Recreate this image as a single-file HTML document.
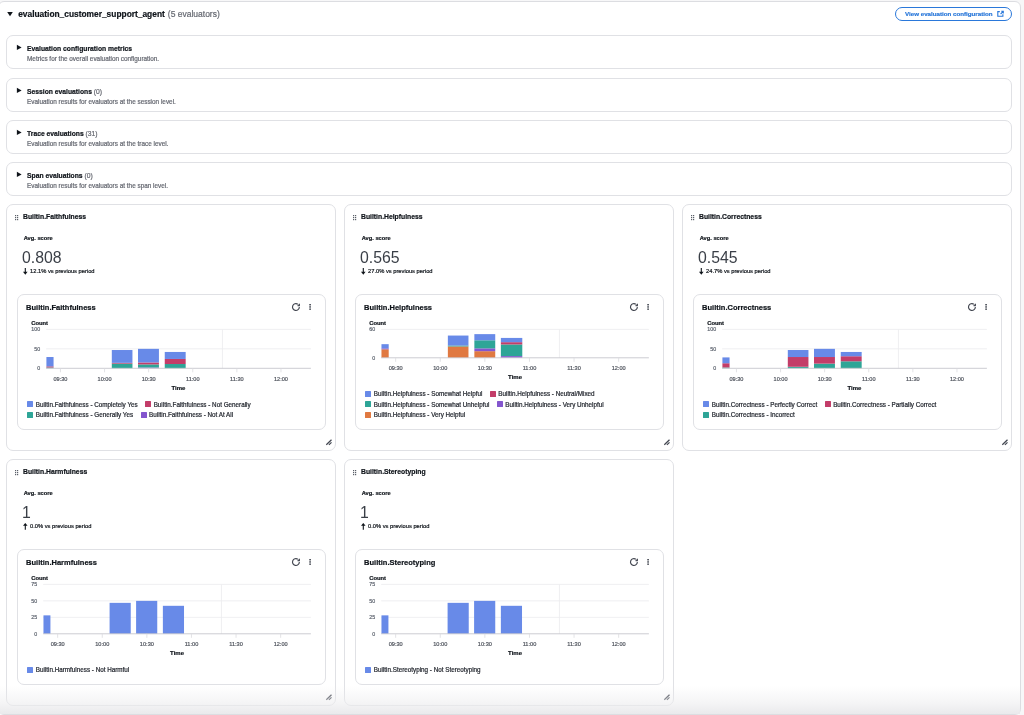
<!DOCTYPE html><html><head><meta charset="utf-8"><style>
html,body{margin:0;padding:0;}
body{width:1024px;height:715px;overflow:hidden;position:relative;background:#f7f7f8;font-family:"Liberation Sans", sans-serif;}
#root{position:absolute;left:0;top:0;width:1024px;height:715px;will-change:transform;}
.t{position:absolute;white-space:nowrap;line-height:1;-webkit-text-stroke:0.2px currentColor;}
.b{position:absolute;box-sizing:border-box;}
svg{position:absolute;left:0;top:0;overflow:visible;}
</style></head><body><div id="root">
<div class="b" style="left:-2.00px;top:1.00px;width:1023.00px;height:713.50px;background:#fff;border:1px solid #dcdde1;border-radius:6px;"></div>
<svg width="1024" height="30"><path d="M7.2 12.1 L12.8 12.1 L10 16.2 Z" fill="#0f141a"/></svg>
<div class="t" style="left:18.20px;top:9.69px;font-size:8.4px;font-weight:bold;color:#0f141a;">evaluation_customer_support_agent</div>
<div class="t" style="left:167.80px;top:9.60px;font-size:8.5px;font-weight:normal;color:#656871;">(5 evaluators)</div>
<div class="b" style="left:895.00px;top:7.00px;width:116.50px;height:13.70px;border:1.4px solid #2a78da;border-radius:8px;background:#fff;"></div>
<div class="t" style="left:905.00px;top:10.75px;font-size:6.2px;font-weight:bold;color:#2a78da;">View evaluation configuration</div>
<svg width="1024" height="30"><g fill="none" stroke="#2a78da" stroke-width="1.1"><path d="M999.8 11.6 H997.8 V16.3 H1002.9 V14.2"/><path d="M1000.6 14 L1003.3 11.3 M1001.2 11.3 H1003.3 V13.4"/></g></svg>
<div class="b" style="left:6.00px;top:35.00px;width:1006.00px;height:34.00px;border:1px solid #e0e1e5;border-radius:7px;background:#fff;"></div>
<svg width="1024" height="715"><path d="M16.9 44.80 L21.6 47.40 L16.9 50.00 Z" fill="#0f141a"/></svg>
<div class="t" style="left:27.00px;top:45.69px;font-size:6.75px;font-weight:bold;color:#0f141a;">Evaluation configuration metrics</div>
<div class="t" style="left:27.00px;top:55.78px;font-size:6.4px;font-weight:normal;color:#656871;">Metrics for the overall evaluation configuration.</div>
<div class="b" style="left:6.00px;top:78.00px;width:1006.00px;height:34.00px;border:1px solid #e0e1e5;border-radius:7px;background:#fff;"></div>
<svg width="1024" height="715"><path d="M16.9 87.80 L21.6 90.40 L16.9 93.00 Z" fill="#0f141a"/></svg>
<div class="t" style="left:27.00px;top:88.69px;font-size:6.75px;font-weight:bold;color:#0f141a;">Session evaluations <span style="font-weight:normal;color:#656871">(0)</span></div>
<div class="t" style="left:27.00px;top:98.78px;font-size:6.4px;font-weight:normal;color:#656871;">Evaluation results for evaluators at the session level.</div>
<div class="b" style="left:6.00px;top:120.00px;width:1006.00px;height:34.00px;border:1px solid #e0e1e5;border-radius:7px;background:#fff;"></div>
<svg width="1024" height="715"><path d="M16.9 129.80 L21.6 132.40 L16.9 135.00 Z" fill="#0f141a"/></svg>
<div class="t" style="left:27.00px;top:130.69px;font-size:6.75px;font-weight:bold;color:#0f141a;">Trace evaluations <span style="font-weight:normal;color:#656871">(31)</span></div>
<div class="t" style="left:27.00px;top:140.78px;font-size:6.4px;font-weight:normal;color:#656871;">Evaluation results for evaluators at the trace level.</div>
<div class="b" style="left:6.00px;top:162.00px;width:1006.00px;height:34.00px;border:1px solid #e0e1e5;border-radius:7px;background:#fff;"></div>
<svg width="1024" height="715"><path d="M16.9 171.80 L21.6 174.40 L16.9 177.00 Z" fill="#0f141a"/></svg>
<div class="t" style="left:27.00px;top:172.69px;font-size:6.75px;font-weight:bold;color:#0f141a;">Span evaluations <span style="font-weight:normal;color:#656871">(0)</span></div>
<div class="t" style="left:27.00px;top:182.78px;font-size:6.4px;font-weight:normal;color:#656871;">Evaluation results for evaluators at the span level.</div>
<div class="b" style="left:6.00px;top:204.00px;width:330.00px;height:247.00px;border:1px solid #e0e1e5;border-radius:7px;background:#fff;"></div>
<svg width="1024" height="715"><rect x="15.00" y="215.00" width="1.2" height="1.2" fill="#5a5f68"/><rect x="15.00" y="217.00" width="1.2" height="1.2" fill="#5a5f68"/><rect x="15.00" y="219.00" width="1.2" height="1.2" fill="#5a5f68"/><rect x="17.00" y="215.00" width="1.2" height="1.2" fill="#5a5f68"/><rect x="17.00" y="217.00" width="1.2" height="1.2" fill="#5a5f68"/><rect x="17.00" y="219.00" width="1.2" height="1.2" fill="#5a5f68"/></svg>
<div class="t" style="left:23.00px;top:213.54px;font-size:6.8px;font-weight:bold;color:#0f141a;">Builtin.Faithfulness</div>
<div class="t" style="left:23.70px;top:236.07px;font-size:5.7px;font-weight:bold;color:#0f141a;">Avg. score</div>
<div class="t" style="left:22.00px;top:250.23px;font-size:15.8px;font-weight:normal;color:#3a3f47;-webkit-text-stroke:0;">0.808</div>
<svg width="1024" height="715"><path d="M25.30 268.00 V272.90" stroke="#0f141a" stroke-width="1.1"/><path d="M23.00 271.80 L25.30 274.70 L27.60 271.80 Z" fill="#0f141a"/></svg>
<div class="t" style="left:30.00px;top:269.23px;font-size:5.75px;font-weight:normal;color:#0f141a;">12.1% vs previous period</div>
<div class="b" style="left:17.00px;top:294.00px;width:309.00px;height:136.00px;border:1px solid #e0e1e5;border-radius:7px;background:#fff;"></div>
<div class="t" style="left:26.10px;top:303.65px;font-size:7.5px;font-weight:bold;color:#0f141a;">Builtin.Faithfulness</div>
<svg width="1024" height="715"><g transform="translate(292.00,303.10) scale(0.49)" fill="none" stroke="#424650" stroke-width="2.3" stroke-linejoin="round"><path d="M15 8a7 7 0 1 1-3.08-5.8"/><path d="M15.01 1.55v3.77h-3.76" fill="#424650"/></g><rect x="309.20" y="304.10" width="1.8" height="1.3" fill="#424650"/><rect x="309.20" y="306.30" width="1.8" height="1.3" fill="#424650"/><rect x="309.20" y="308.50" width="1.8" height="1.3" fill="#424650"/></svg>
<div class="t" style="left:31.30px;top:320.79px;font-size:5.8px;font-weight:bold;color:#0f141a;">Count</div>
<div class="t" style="left:40.14px;top:327.41px;font-size:5.3px;font-weight:normal;color:#5f6570;transform:translateX(-100%);">100</div>
<div class="t" style="left:40.14px;top:346.86px;font-size:5.3px;font-weight:normal;color:#5f6570;transform:translateX(-100%);">50</div>
<div class="t" style="left:40.14px;top:366.31px;font-size:5.3px;font-weight:normal;color:#5f6570;transform:translateX(-100%);">0</div>
<div class="t" style="left:60.44px;top:376.66px;font-size:5.6px;font-weight:normal;color:#50555e;transform:translateX(-50%);">09:30</div>
<div class="t" style="left:104.55px;top:376.66px;font-size:5.6px;font-weight:normal;color:#50555e;transform:translateX(-50%);">10:00</div>
<div class="t" style="left:148.66px;top:376.66px;font-size:5.6px;font-weight:normal;color:#50555e;transform:translateX(-50%);">10:30</div>
<div class="t" style="left:192.77px;top:376.66px;font-size:5.6px;font-weight:normal;color:#50555e;transform:translateX(-50%);">11:00</div>
<div class="t" style="left:236.87px;top:376.66px;font-size:5.6px;font-weight:normal;color:#50555e;transform:translateX(-50%);">11:30</div>
<div class="t" style="left:280.98px;top:376.66px;font-size:5.6px;font-weight:normal;color:#50555e;transform:translateX(-50%);">12:00</div>
<div class="t" style="left:178.52px;top:384.82px;font-size:6px;font-weight:bold;color:#0f141a;transform:translateX(-50%);">Time</div>
<svg width="1024" height="715"><line x1="46.14" y1="329.40" x2="310.90" y2="329.40" stroke="#ebebee" stroke-width="0.8"/><line x1="46.14" y1="348.85" x2="310.90" y2="348.85" stroke="#ebebee" stroke-width="0.8"/><line x1="222.47" y1="329.40" x2="222.47" y2="368.30" stroke="#ececef" stroke-width="0.8"/><rect x="46.41" y="367.52" width="7.15" height="0.78" fill="#2ea597"/><rect x="46.41" y="366.36" width="7.15" height="1.17" fill="#c33d69"/><rect x="46.41" y="357.02" width="7.15" height="9.34" fill="#688ae8"/><rect x="111.80" y="363.63" width="20.65" height="4.67" fill="#2ea597"/><rect x="111.80" y="362.85" width="20.65" height="0.78" fill="#c33d69"/><rect x="111.80" y="350.02" width="20.65" height="12.84" fill="#688ae8"/><rect x="138.01" y="367.52" width="20.92" height="0.78" fill="#8456ce"/><rect x="138.01" y="364.41" width="20.92" height="3.11" fill="#2ea597"/><rect x="138.01" y="362.46" width="20.92" height="1.95" fill="#c33d69"/><rect x="138.01" y="348.85" width="20.92" height="13.62" fill="#688ae8"/><rect x="164.75" y="364.02" width="20.92" height="4.28" fill="#2ea597"/><rect x="164.75" y="358.96" width="20.92" height="5.06" fill="#c33d69"/><rect x="164.75" y="351.96" width="20.92" height="7.00" fill="#688ae8"/><line x1="46.14" y1="368.30" x2="310.90" y2="368.30" stroke="#c6c6cd" stroke-width="0.9"/><line x1="60.44" y1="368.30" x2="60.44" y2="372.30" stroke="#dcdce0" stroke-width="0.8"/><line x1="104.55" y1="368.30" x2="104.55" y2="372.30" stroke="#dcdce0" stroke-width="0.8"/><line x1="148.66" y1="368.30" x2="148.66" y2="372.30" stroke="#dcdce0" stroke-width="0.8"/><line x1="192.77" y1="368.30" x2="192.77" y2="372.30" stroke="#dcdce0" stroke-width="0.8"/><line x1="236.87" y1="368.30" x2="236.87" y2="372.30" stroke="#dcdce0" stroke-width="0.8"/><line x1="280.98" y1="368.30" x2="280.98" y2="372.30" stroke="#dcdce0" stroke-width="0.8"/></svg>
<div class="b" style="left:27.30px;top:401.40px;width:6.00px;height:6.00px;background:#688ae8;border-radius:0.5px;"></div>
<div class="t" style="left:35.80px;top:401.67px;font-size:6.3px;font-weight:normal;color:#1d2129;">Builtin.Faithfulness - Completely Yes</div>
<div class="b" style="left:145.16px;top:401.40px;width:6.00px;height:6.00px;background:#c33d69;border-radius:0.5px;"></div>
<div class="t" style="left:153.66px;top:401.67px;font-size:6.3px;font-weight:normal;color:#1d2129;">Builtin.Faithfulness - Not Generally</div>
<div class="b" style="left:27.30px;top:412.00px;width:6.00px;height:6.00px;background:#2ea597;border-radius:0.5px;"></div>
<div class="t" style="left:35.80px;top:412.27px;font-size:6.3px;font-weight:normal;color:#1d2129;">Builtin.Faithfulness - Generally Yes</div>
<div class="b" style="left:140.61px;top:412.00px;width:6.00px;height:6.00px;background:#8456ce;border-radius:0.5px;"></div>
<div class="t" style="left:149.11px;top:412.27px;font-size:6.3px;font-weight:normal;color:#1d2129;">Builtin.Faithfulness - Not At All</div>
<svg width="1024" height="715"><path d="M326.30 444.70 L331.50 439.80 M328.90 444.90 L331.50 442.40" stroke="#424650" stroke-width="1.25"/></svg>
<div class="b" style="left:344.00px;top:204.00px;width:330.00px;height:247.00px;border:1px solid #e0e1e5;border-radius:7px;background:#fff;"></div>
<svg width="1024" height="715"><rect x="353.00" y="215.00" width="1.2" height="1.2" fill="#5a5f68"/><rect x="353.00" y="217.00" width="1.2" height="1.2" fill="#5a5f68"/><rect x="353.00" y="219.00" width="1.2" height="1.2" fill="#5a5f68"/><rect x="355.00" y="215.00" width="1.2" height="1.2" fill="#5a5f68"/><rect x="355.00" y="217.00" width="1.2" height="1.2" fill="#5a5f68"/><rect x="355.00" y="219.00" width="1.2" height="1.2" fill="#5a5f68"/></svg>
<div class="t" style="left:361.00px;top:213.54px;font-size:6.8px;font-weight:bold;color:#0f141a;">Builtin.Helpfulness</div>
<div class="t" style="left:361.70px;top:236.07px;font-size:5.7px;font-weight:bold;color:#0f141a;">Avg. score</div>
<div class="t" style="left:360.00px;top:250.23px;font-size:15.8px;font-weight:normal;color:#3a3f47;-webkit-text-stroke:0;">0.565</div>
<svg width="1024" height="715"><path d="M363.30 268.00 V272.90" stroke="#0f141a" stroke-width="1.1"/><path d="M361.00 271.80 L363.30 274.70 L365.60 271.80 Z" fill="#0f141a"/></svg>
<div class="t" style="left:368.00px;top:269.23px;font-size:5.75px;font-weight:normal;color:#0f141a;">27.0% vs previous period</div>
<div class="b" style="left:355.00px;top:294.00px;width:309.00px;height:136.00px;border:1px solid #e0e1e5;border-radius:7px;background:#fff;"></div>
<div class="t" style="left:364.10px;top:303.65px;font-size:7.5px;font-weight:bold;color:#0f141a;">Builtin.Helpfulness</div>
<svg width="1024" height="715"><g transform="translate(630.00,303.10) scale(0.49)" fill="none" stroke="#424650" stroke-width="2.3" stroke-linejoin="round"><path d="M15 8a7 7 0 1 1-3.08-5.8"/><path d="M15.01 1.55v3.77h-3.76" fill="#424650"/></g><rect x="647.20" y="304.10" width="1.8" height="1.3" fill="#424650"/><rect x="647.20" y="306.30" width="1.8" height="1.3" fill="#424650"/><rect x="647.20" y="308.50" width="1.8" height="1.3" fill="#424650"/></svg>
<div class="t" style="left:369.30px;top:320.79px;font-size:5.8px;font-weight:bold;color:#0f141a;">Count</div>
<div class="t" style="left:375.21px;top:327.41px;font-size:5.3px;font-weight:normal;color:#5f6570;transform:translateX(-100%);">60</div>
<div class="t" style="left:375.21px;top:355.81px;font-size:5.3px;font-weight:normal;color:#5f6570;transform:translateX(-100%);">0</div>
<div class="t" style="left:395.66px;top:366.16px;font-size:5.6px;font-weight:normal;color:#50555e;transform:translateX(-50%);">09:30</div>
<div class="t" style="left:440.26px;top:366.16px;font-size:5.6px;font-weight:normal;color:#50555e;transform:translateX(-50%);">10:00</div>
<div class="t" style="left:484.86px;top:366.16px;font-size:5.6px;font-weight:normal;color:#50555e;transform:translateX(-50%);">10:30</div>
<div class="t" style="left:529.46px;top:366.16px;font-size:5.6px;font-weight:normal;color:#50555e;transform:translateX(-50%);">11:00</div>
<div class="t" style="left:574.05px;top:366.16px;font-size:5.6px;font-weight:normal;color:#50555e;transform:translateX(-50%);">11:30</div>
<div class="t" style="left:618.65px;top:366.16px;font-size:5.6px;font-weight:normal;color:#50555e;transform:translateX(-50%);">12:00</div>
<div class="t" style="left:515.05px;top:374.32px;font-size:6px;font-weight:bold;color:#0f141a;transform:translateX(-50%);">Time</div>
<svg width="1024" height="715"><line x1="381.21" y1="329.40" x2="648.90" y2="329.40" stroke="#ebebee" stroke-width="0.8"/><line x1="559.49" y1="329.40" x2="559.49" y2="357.80" stroke="#ececef" stroke-width="0.8"/><rect x="381.47" y="349.28" width="7.23" height="8.52" fill="#e07941"/><rect x="381.47" y="348.33" width="7.23" height="0.95" fill="#8456ce"/><rect x="381.47" y="344.17" width="7.23" height="4.17" fill="#688ae8"/><rect x="447.86" y="346.44" width="20.61" height="11.36" fill="#e07941"/><rect x="447.86" y="345.49" width="20.61" height="0.95" fill="#2ea597"/><rect x="447.86" y="335.55" width="20.61" height="9.94" fill="#688ae8"/><rect x="474.36" y="351.17" width="20.88" height="6.63" fill="#e07941"/><rect x="474.36" y="348.33" width="20.88" height="2.84" fill="#8456ce"/><rect x="474.36" y="340.29" width="20.88" height="8.05" fill="#2ea597"/><rect x="474.36" y="334.13" width="20.88" height="6.15" fill="#688ae8"/><rect x="500.87" y="356.10" width="21.42" height="1.70" fill="#8456ce"/><rect x="500.87" y="344.45" width="21.42" height="11.64" fill="#2ea597"/><rect x="500.87" y="342.18" width="21.42" height="2.27" fill="#c33d69"/><rect x="500.87" y="337.92" width="21.42" height="4.26" fill="#688ae8"/><line x1="381.21" y1="357.80" x2="648.90" y2="357.80" stroke="#c6c6cd" stroke-width="0.9"/><line x1="395.66" y1="357.80" x2="395.66" y2="361.80" stroke="#dcdce0" stroke-width="0.8"/><line x1="440.26" y1="357.80" x2="440.26" y2="361.80" stroke="#dcdce0" stroke-width="0.8"/><line x1="484.86" y1="357.80" x2="484.86" y2="361.80" stroke="#dcdce0" stroke-width="0.8"/><line x1="529.46" y1="357.80" x2="529.46" y2="361.80" stroke="#dcdce0" stroke-width="0.8"/><line x1="574.05" y1="357.80" x2="574.05" y2="361.80" stroke="#dcdce0" stroke-width="0.8"/><line x1="618.65" y1="357.80" x2="618.65" y2="361.80" stroke="#dcdce0" stroke-width="0.8"/></svg>
<div class="b" style="left:365.30px;top:390.80px;width:6.00px;height:6.00px;background:#688ae8;border-radius:0.5px;"></div>
<div class="t" style="left:373.80px;top:391.07px;font-size:6.3px;font-weight:normal;color:#1d2129;">Builtin.Helpfulness - Somewhat Helpful</div>
<div class="b" style="left:489.80px;top:390.80px;width:6.00px;height:6.00px;background:#c33d69;border-radius:0.5px;"></div>
<div class="t" style="left:498.30px;top:391.07px;font-size:6.3px;font-weight:normal;color:#1d2129;">Builtin.Helpfulness - Neutral/Mixed</div>
<div class="b" style="left:365.30px;top:401.40px;width:6.00px;height:6.00px;background:#2ea597;border-radius:0.5px;"></div>
<div class="t" style="left:373.80px;top:401.67px;font-size:6.3px;font-weight:normal;color:#1d2129;">Builtin.Helpfulness - Somewhat Unhelpful</div>
<div class="b" style="left:496.82px;top:401.40px;width:6.00px;height:6.00px;background:#8456ce;border-radius:0.5px;"></div>
<div class="t" style="left:505.32px;top:401.67px;font-size:6.3px;font-weight:normal;color:#1d2129;">Builtin.Helpfulness - Very Unhelpful</div>
<div class="b" style="left:365.30px;top:412.00px;width:6.00px;height:6.00px;background:#e07941;border-radius:0.5px;"></div>
<div class="t" style="left:373.80px;top:412.27px;font-size:6.3px;font-weight:normal;color:#1d2129;">Builtin.Helpfulness - Very Helpful</div>
<svg width="1024" height="715"><path d="M664.30 444.70 L669.50 439.80 M666.90 444.90 L669.50 442.40" stroke="#424650" stroke-width="1.25"/></svg>
<div class="b" style="left:682.00px;top:204.00px;width:330.00px;height:247.00px;border:1px solid #e0e1e5;border-radius:7px;background:#fff;"></div>
<svg width="1024" height="715"><rect x="691.00" y="215.00" width="1.2" height="1.2" fill="#5a5f68"/><rect x="691.00" y="217.00" width="1.2" height="1.2" fill="#5a5f68"/><rect x="691.00" y="219.00" width="1.2" height="1.2" fill="#5a5f68"/><rect x="693.00" y="215.00" width="1.2" height="1.2" fill="#5a5f68"/><rect x="693.00" y="217.00" width="1.2" height="1.2" fill="#5a5f68"/><rect x="693.00" y="219.00" width="1.2" height="1.2" fill="#5a5f68"/></svg>
<div class="t" style="left:699.00px;top:213.54px;font-size:6.8px;font-weight:bold;color:#0f141a;">Builtin.Correctness</div>
<div class="t" style="left:699.70px;top:236.07px;font-size:5.7px;font-weight:bold;color:#0f141a;">Avg. score</div>
<div class="t" style="left:698.00px;top:250.23px;font-size:15.8px;font-weight:normal;color:#3a3f47;-webkit-text-stroke:0;">0.545</div>
<svg width="1024" height="715"><path d="M701.30 268.00 V272.90" stroke="#0f141a" stroke-width="1.1"/><path d="M699.00 271.80 L701.30 274.70 L703.60 271.80 Z" fill="#0f141a"/></svg>
<div class="t" style="left:706.00px;top:269.23px;font-size:5.75px;font-weight:normal;color:#0f141a;">24.7% vs previous period</div>
<div class="b" style="left:693.00px;top:294.00px;width:309.00px;height:136.00px;border:1px solid #e0e1e5;border-radius:7px;background:#fff;"></div>
<div class="t" style="left:702.10px;top:303.65px;font-size:7.5px;font-weight:bold;color:#0f141a;">Builtin.Correctness</div>
<svg width="1024" height="715"><g transform="translate(968.00,303.10) scale(0.49)" fill="none" stroke="#424650" stroke-width="2.3" stroke-linejoin="round"><path d="M15 8a7 7 0 1 1-3.08-5.8"/><path d="M15.01 1.55v3.77h-3.76" fill="#424650"/></g><rect x="985.20" y="304.10" width="1.8" height="1.3" fill="#424650"/><rect x="985.20" y="306.30" width="1.8" height="1.3" fill="#424650"/><rect x="985.20" y="308.50" width="1.8" height="1.3" fill="#424650"/></svg>
<div class="t" style="left:707.30px;top:320.79px;font-size:5.8px;font-weight:bold;color:#0f141a;">Count</div>
<div class="t" style="left:716.14px;top:327.41px;font-size:5.3px;font-weight:normal;color:#5f6570;transform:translateX(-100%);">100</div>
<div class="t" style="left:716.14px;top:346.86px;font-size:5.3px;font-weight:normal;color:#5f6570;transform:translateX(-100%);">50</div>
<div class="t" style="left:716.14px;top:366.31px;font-size:5.3px;font-weight:normal;color:#5f6570;transform:translateX(-100%);">0</div>
<div class="t" style="left:736.44px;top:376.66px;font-size:5.6px;font-weight:normal;color:#50555e;transform:translateX(-50%);">09:30</div>
<div class="t" style="left:780.55px;top:376.66px;font-size:5.6px;font-weight:normal;color:#50555e;transform:translateX(-50%);">10:00</div>
<div class="t" style="left:824.66px;top:376.66px;font-size:5.6px;font-weight:normal;color:#50555e;transform:translateX(-50%);">10:30</div>
<div class="t" style="left:868.77px;top:376.66px;font-size:5.6px;font-weight:normal;color:#50555e;transform:translateX(-50%);">11:00</div>
<div class="t" style="left:912.87px;top:376.66px;font-size:5.6px;font-weight:normal;color:#50555e;transform:translateX(-50%);">11:30</div>
<div class="t" style="left:956.98px;top:376.66px;font-size:5.6px;font-weight:normal;color:#50555e;transform:translateX(-50%);">12:00</div>
<div class="t" style="left:854.52px;top:384.82px;font-size:6px;font-weight:bold;color:#0f141a;transform:translateX(-50%);">Time</div>
<svg width="1024" height="715"><line x1="722.14" y1="329.40" x2="986.90" y2="329.40" stroke="#ebebee" stroke-width="0.8"/><line x1="722.14" y1="348.85" x2="986.90" y2="348.85" stroke="#ebebee" stroke-width="0.8"/><line x1="898.47" y1="329.40" x2="898.47" y2="368.30" stroke="#ececef" stroke-width="0.8"/><rect x="722.41" y="367.52" width="7.15" height="0.78" fill="#2ea597"/><rect x="722.41" y="363.24" width="7.15" height="4.28" fill="#c33d69"/><rect x="722.41" y="357.41" width="7.15" height="5.84" fill="#688ae8"/><rect x="787.80" y="366.74" width="20.65" height="1.56" fill="#2ea597"/><rect x="787.80" y="357.02" width="20.65" height="9.73" fill="#c33d69"/><rect x="787.80" y="350.02" width="20.65" height="7.00" fill="#688ae8"/><rect x="814.01" y="363.63" width="20.92" height="4.67" fill="#2ea597"/><rect x="814.01" y="357.02" width="20.92" height="6.61" fill="#c33d69"/><rect x="814.01" y="348.85" width="20.92" height="8.17" fill="#688ae8"/><rect x="840.75" y="361.30" width="20.92" height="7.00" fill="#2ea597"/><rect x="840.75" y="356.24" width="20.92" height="5.06" fill="#c33d69"/><rect x="840.75" y="351.96" width="20.92" height="4.28" fill="#688ae8"/><line x1="722.14" y1="368.30" x2="986.90" y2="368.30" stroke="#c6c6cd" stroke-width="0.9"/><line x1="736.44" y1="368.30" x2="736.44" y2="372.30" stroke="#dcdce0" stroke-width="0.8"/><line x1="780.55" y1="368.30" x2="780.55" y2="372.30" stroke="#dcdce0" stroke-width="0.8"/><line x1="824.66" y1="368.30" x2="824.66" y2="372.30" stroke="#dcdce0" stroke-width="0.8"/><line x1="868.77" y1="368.30" x2="868.77" y2="372.30" stroke="#dcdce0" stroke-width="0.8"/><line x1="912.87" y1="368.30" x2="912.87" y2="372.30" stroke="#dcdce0" stroke-width="0.8"/><line x1="956.98" y1="368.30" x2="956.98" y2="372.30" stroke="#dcdce0" stroke-width="0.8"/></svg>
<div class="b" style="left:703.30px;top:401.40px;width:6.00px;height:6.00px;background:#688ae8;border-radius:0.5px;"></div>
<div class="t" style="left:711.80px;top:401.67px;font-size:6.3px;font-weight:normal;color:#1d2129;">Builtin.Correctness - Perfectly Correct</div>
<div class="b" style="left:824.64px;top:401.40px;width:6.00px;height:6.00px;background:#c33d69;border-radius:0.5px;"></div>
<div class="t" style="left:833.14px;top:401.67px;font-size:6.3px;font-weight:normal;color:#1d2129;">Builtin.Correctness - Partially Correct</div>
<div class="b" style="left:703.30px;top:412.00px;width:6.00px;height:6.00px;background:#2ea597;border-radius:0.5px;"></div>
<div class="t" style="left:711.80px;top:412.27px;font-size:6.3px;font-weight:normal;color:#1d2129;">Builtin.Correctness - Incorrect</div>
<svg width="1024" height="715"><path d="M1002.30 444.70 L1007.50 439.80 M1004.90 444.90 L1007.50 442.40" stroke="#424650" stroke-width="1.25"/></svg>
<div class="b" style="left:6.00px;top:459.00px;width:330.00px;height:247.00px;border:1px solid #e0e1e5;border-radius:7px;background:#fff;"></div>
<svg width="1024" height="715"><rect x="15.00" y="470.00" width="1.2" height="1.2" fill="#5a5f68"/><rect x="15.00" y="472.00" width="1.2" height="1.2" fill="#5a5f68"/><rect x="15.00" y="474.00" width="1.2" height="1.2" fill="#5a5f68"/><rect x="17.00" y="470.00" width="1.2" height="1.2" fill="#5a5f68"/><rect x="17.00" y="472.00" width="1.2" height="1.2" fill="#5a5f68"/><rect x="17.00" y="474.00" width="1.2" height="1.2" fill="#5a5f68"/></svg>
<div class="t" style="left:23.00px;top:468.54px;font-size:6.8px;font-weight:bold;color:#0f141a;">Builtin.Harmfulness</div>
<div class="t" style="left:23.70px;top:491.07px;font-size:5.7px;font-weight:bold;color:#0f141a;">Avg. score</div>
<div class="t" style="left:22.00px;top:505.23px;font-size:15.8px;font-weight:normal;color:#3a3f47;-webkit-text-stroke:0;">1</div>
<svg width="1024" height="715"><path d="M25.30 529.70 V524.40" stroke="#0f141a" stroke-width="1.1"/><path d="M23.00 525.80 L25.30 523.00 L27.60 525.80 Z" fill="#0f141a"/></svg>
<div class="t" style="left:30.00px;top:524.23px;font-size:5.75px;font-weight:normal;color:#0f141a;">0.0% vs previous period</div>
<div class="b" style="left:17.00px;top:549.00px;width:309.00px;height:136.00px;border:1px solid #e0e1e5;border-radius:7px;background:#fff;"></div>
<div class="t" style="left:26.10px;top:558.65px;font-size:7.5px;font-weight:bold;color:#0f141a;">Builtin.Harmfulness</div>
<svg width="1024" height="715"><g transform="translate(292.00,558.10) scale(0.49)" fill="none" stroke="#424650" stroke-width="2.3" stroke-linejoin="round"><path d="M15 8a7 7 0 1 1-3.08-5.8"/><path d="M15.01 1.55v3.77h-3.76" fill="#424650"/></g><rect x="309.20" y="559.10" width="1.8" height="1.3" fill="#424650"/><rect x="309.20" y="561.30" width="1.8" height="1.3" fill="#424650"/><rect x="309.20" y="563.50" width="1.8" height="1.3" fill="#424650"/></svg>
<div class="t" style="left:31.30px;top:575.79px;font-size:5.8px;font-weight:bold;color:#0f141a;">Count</div>
<div class="t" style="left:37.21px;top:582.41px;font-size:5.3px;font-weight:normal;color:#5f6570;transform:translateX(-100%);">75</div>
<div class="t" style="left:37.21px;top:598.88px;font-size:5.3px;font-weight:normal;color:#5f6570;transform:translateX(-100%);">50</div>
<div class="t" style="left:37.21px;top:615.35px;font-size:5.3px;font-weight:normal;color:#5f6570;transform:translateX(-100%);">25</div>
<div class="t" style="left:37.21px;top:631.81px;font-size:5.3px;font-weight:normal;color:#5f6570;transform:translateX(-100%);">0</div>
<div class="t" style="left:57.66px;top:642.16px;font-size:5.6px;font-weight:normal;color:#50555e;transform:translateX(-50%);">09:30</div>
<div class="t" style="left:102.26px;top:642.16px;font-size:5.6px;font-weight:normal;color:#50555e;transform:translateX(-50%);">10:00</div>
<div class="t" style="left:146.86px;top:642.16px;font-size:5.6px;font-weight:normal;color:#50555e;transform:translateX(-50%);">10:30</div>
<div class="t" style="left:191.46px;top:642.16px;font-size:5.6px;font-weight:normal;color:#50555e;transform:translateX(-50%);">11:00</div>
<div class="t" style="left:236.05px;top:642.16px;font-size:5.6px;font-weight:normal;color:#50555e;transform:translateX(-50%);">11:30</div>
<div class="t" style="left:280.65px;top:642.16px;font-size:5.6px;font-weight:normal;color:#50555e;transform:translateX(-50%);">12:00</div>
<div class="t" style="left:177.05px;top:650.32px;font-size:6px;font-weight:bold;color:#0f141a;transform:translateX(-50%);">Time</div>
<svg width="1024" height="715"><line x1="43.21" y1="584.40" x2="310.90" y2="584.40" stroke="#ebebee" stroke-width="0.8"/><line x1="43.21" y1="600.87" x2="310.90" y2="600.87" stroke="#ebebee" stroke-width="0.8"/><line x1="43.21" y1="617.33" x2="310.90" y2="617.33" stroke="#ebebee" stroke-width="0.8"/><line x1="221.49" y1="584.40" x2="221.49" y2="633.80" stroke="#ececef" stroke-width="0.8"/><rect x="43.47" y="615.36" width="6.96" height="18.44" fill="#688ae8"/><rect x="109.59" y="602.84" width="21.15" height="30.96" fill="#688ae8"/><rect x="136.10" y="600.87" width="21.15" height="32.93" fill="#688ae8"/><rect x="162.87" y="605.81" width="21.15" height="27.99" fill="#688ae8"/><line x1="43.21" y1="633.80" x2="310.90" y2="633.80" stroke="#c6c6cd" stroke-width="0.9"/><line x1="57.66" y1="633.80" x2="57.66" y2="637.80" stroke="#dcdce0" stroke-width="0.8"/><line x1="102.26" y1="633.80" x2="102.26" y2="637.80" stroke="#dcdce0" stroke-width="0.8"/><line x1="146.86" y1="633.80" x2="146.86" y2="637.80" stroke="#dcdce0" stroke-width="0.8"/><line x1="191.46" y1="633.80" x2="191.46" y2="637.80" stroke="#dcdce0" stroke-width="0.8"/><line x1="236.05" y1="633.80" x2="236.05" y2="637.80" stroke="#dcdce0" stroke-width="0.8"/><line x1="280.65" y1="633.80" x2="280.65" y2="637.80" stroke="#dcdce0" stroke-width="0.8"/></svg>
<div class="b" style="left:27.30px;top:667.00px;width:6.00px;height:6.00px;background:#688ae8;border-radius:0.5px;"></div>
<div class="t" style="left:35.80px;top:667.27px;font-size:6.3px;font-weight:normal;color:#1d2129;">Builtin.Harmfulness - Not Harmful</div>
<svg width="1024" height="715"><path d="M326.30 699.70 L331.50 694.80 M328.90 699.90 L331.50 697.40" stroke="#424650" stroke-width="1.25"/></svg>
<div class="b" style="left:344.00px;top:459.00px;width:330.00px;height:247.00px;border:1px solid #e0e1e5;border-radius:7px;background:#fff;"></div>
<svg width="1024" height="715"><rect x="353.00" y="470.00" width="1.2" height="1.2" fill="#5a5f68"/><rect x="353.00" y="472.00" width="1.2" height="1.2" fill="#5a5f68"/><rect x="353.00" y="474.00" width="1.2" height="1.2" fill="#5a5f68"/><rect x="355.00" y="470.00" width="1.2" height="1.2" fill="#5a5f68"/><rect x="355.00" y="472.00" width="1.2" height="1.2" fill="#5a5f68"/><rect x="355.00" y="474.00" width="1.2" height="1.2" fill="#5a5f68"/></svg>
<div class="t" style="left:361.00px;top:468.54px;font-size:6.8px;font-weight:bold;color:#0f141a;">Builtin.Stereotyping</div>
<div class="t" style="left:361.70px;top:491.07px;font-size:5.7px;font-weight:bold;color:#0f141a;">Avg. score</div>
<div class="t" style="left:360.00px;top:505.23px;font-size:15.8px;font-weight:normal;color:#3a3f47;-webkit-text-stroke:0;">1</div>
<svg width="1024" height="715"><path d="M363.30 529.70 V524.40" stroke="#0f141a" stroke-width="1.1"/><path d="M361.00 525.80 L363.30 523.00 L365.60 525.80 Z" fill="#0f141a"/></svg>
<div class="t" style="left:368.00px;top:524.23px;font-size:5.75px;font-weight:normal;color:#0f141a;">0.0% vs previous period</div>
<div class="b" style="left:355.00px;top:549.00px;width:309.00px;height:136.00px;border:1px solid #e0e1e5;border-radius:7px;background:#fff;"></div>
<div class="t" style="left:364.10px;top:558.65px;font-size:7.5px;font-weight:bold;color:#0f141a;">Builtin.Stereotyping</div>
<svg width="1024" height="715"><g transform="translate(630.00,558.10) scale(0.49)" fill="none" stroke="#424650" stroke-width="2.3" stroke-linejoin="round"><path d="M15 8a7 7 0 1 1-3.08-5.8"/><path d="M15.01 1.55v3.77h-3.76" fill="#424650"/></g><rect x="647.20" y="559.10" width="1.8" height="1.3" fill="#424650"/><rect x="647.20" y="561.30" width="1.8" height="1.3" fill="#424650"/><rect x="647.20" y="563.50" width="1.8" height="1.3" fill="#424650"/></svg>
<div class="t" style="left:369.30px;top:575.79px;font-size:5.8px;font-weight:bold;color:#0f141a;">Count</div>
<div class="t" style="left:375.21px;top:582.41px;font-size:5.3px;font-weight:normal;color:#5f6570;transform:translateX(-100%);">75</div>
<div class="t" style="left:375.21px;top:598.88px;font-size:5.3px;font-weight:normal;color:#5f6570;transform:translateX(-100%);">50</div>
<div class="t" style="left:375.21px;top:615.35px;font-size:5.3px;font-weight:normal;color:#5f6570;transform:translateX(-100%);">25</div>
<div class="t" style="left:375.21px;top:631.81px;font-size:5.3px;font-weight:normal;color:#5f6570;transform:translateX(-100%);">0</div>
<div class="t" style="left:395.66px;top:642.16px;font-size:5.6px;font-weight:normal;color:#50555e;transform:translateX(-50%);">09:30</div>
<div class="t" style="left:440.26px;top:642.16px;font-size:5.6px;font-weight:normal;color:#50555e;transform:translateX(-50%);">10:00</div>
<div class="t" style="left:484.86px;top:642.16px;font-size:5.6px;font-weight:normal;color:#50555e;transform:translateX(-50%);">10:30</div>
<div class="t" style="left:529.46px;top:642.16px;font-size:5.6px;font-weight:normal;color:#50555e;transform:translateX(-50%);">11:00</div>
<div class="t" style="left:574.05px;top:642.16px;font-size:5.6px;font-weight:normal;color:#50555e;transform:translateX(-50%);">11:30</div>
<div class="t" style="left:618.65px;top:642.16px;font-size:5.6px;font-weight:normal;color:#50555e;transform:translateX(-50%);">12:00</div>
<div class="t" style="left:515.05px;top:650.32px;font-size:6px;font-weight:bold;color:#0f141a;transform:translateX(-50%);">Time</div>
<svg width="1024" height="715"><line x1="381.21" y1="584.40" x2="648.90" y2="584.40" stroke="#ebebee" stroke-width="0.8"/><line x1="381.21" y1="600.87" x2="648.90" y2="600.87" stroke="#ebebee" stroke-width="0.8"/><line x1="381.21" y1="617.33" x2="648.90" y2="617.33" stroke="#ebebee" stroke-width="0.8"/><line x1="559.49" y1="584.40" x2="559.49" y2="633.80" stroke="#ececef" stroke-width="0.8"/><rect x="381.47" y="615.36" width="6.96" height="18.44" fill="#688ae8"/><rect x="447.59" y="602.84" width="21.15" height="30.96" fill="#688ae8"/><rect x="474.10" y="600.87" width="21.15" height="32.93" fill="#688ae8"/><rect x="500.87" y="605.81" width="21.15" height="27.99" fill="#688ae8"/><line x1="381.21" y1="633.80" x2="648.90" y2="633.80" stroke="#c6c6cd" stroke-width="0.9"/><line x1="395.66" y1="633.80" x2="395.66" y2="637.80" stroke="#dcdce0" stroke-width="0.8"/><line x1="440.26" y1="633.80" x2="440.26" y2="637.80" stroke="#dcdce0" stroke-width="0.8"/><line x1="484.86" y1="633.80" x2="484.86" y2="637.80" stroke="#dcdce0" stroke-width="0.8"/><line x1="529.46" y1="633.80" x2="529.46" y2="637.80" stroke="#dcdce0" stroke-width="0.8"/><line x1="574.05" y1="633.80" x2="574.05" y2="637.80" stroke="#dcdce0" stroke-width="0.8"/><line x1="618.65" y1="633.80" x2="618.65" y2="637.80" stroke="#dcdce0" stroke-width="0.8"/></svg>
<div class="b" style="left:365.30px;top:667.00px;width:6.00px;height:6.00px;background:#688ae8;border-radius:0.5px;"></div>
<div class="t" style="left:373.80px;top:667.27px;font-size:6.3px;font-weight:normal;color:#1d2129;">Builtin.Stereotyping - Not Stereotyping</div>
<svg width="1024" height="715"><path d="M664.30 699.70 L669.50 694.80 M666.90 699.90 L669.50 697.40" stroke="#424650" stroke-width="1.25"/></svg>
<div class="b" style="left:0.00px;top:686.00px;width:1020.00px;height:27.50px;background:linear-gradient(to bottom, rgba(236,236,238,0) 0%, rgba(236,236,238,0.55) 60%, rgba(234,234,236,1) 100%);"></div>
</div></body></html>
